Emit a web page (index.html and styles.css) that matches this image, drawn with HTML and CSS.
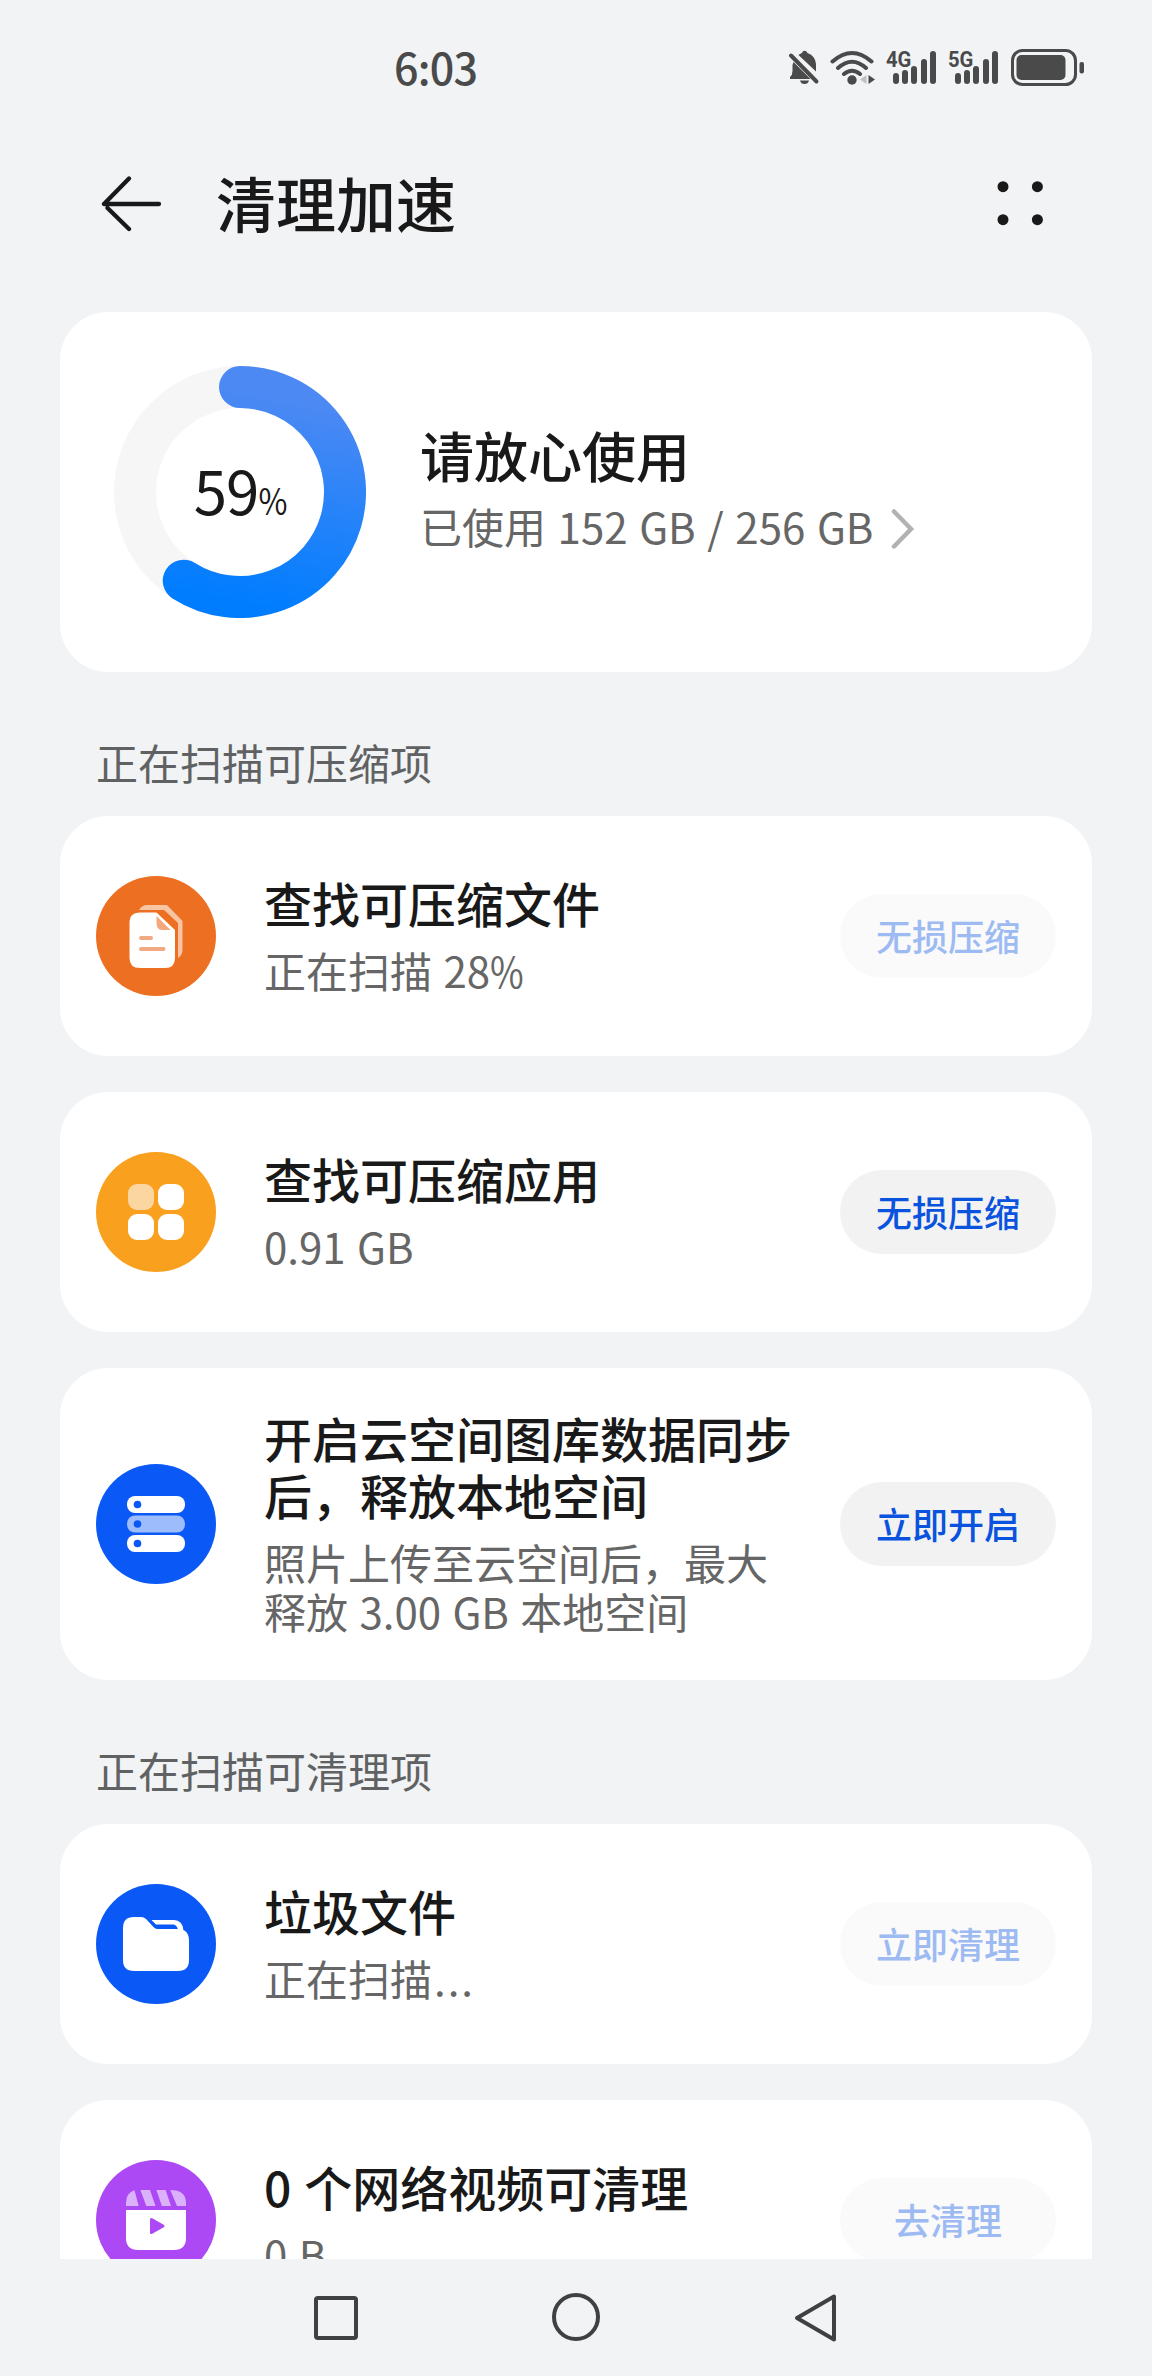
FILE: index.html
```html
<!DOCTYPE html>
<html lang="zh-CN">
<head>
<meta charset="utf-8">
<title>清理加速</title>
<link rel="stylesheet" href="styles.css">
</head>
<body>
<div class="screen">
  <header class="status">
    <span class="time">6:03</span>
    <div class="status-icons">
      <svg class="bell" width="32" height="36" viewBox="0 0 32 36"><path d="M5.500 12 L22.500 29 H2 V27 Q4.500 25 4.500 21 V15 Z M10.500 5 Q12.500 3.500 14 3 Q14.500 0.700 16.500 0.700 Q18.500 0.700 19.500 3 Q27.500 6 28 14 V21.500 Z M12 30.500 H21 Q20 34 16.500 34 Q13 34 12 30.500 Z"/><path class="line" d="M3 5.500 L28.500 31.500" stroke-width="4"/></svg>
      <svg class="wifi" width="46" height="36" viewBox="0 0 46 36"><path class="line" d="M2.500 11.500 Q22 -5.500 41.500 11.500 M8 18 Q22 5.500 36 18 M14 24 Q22 17.500 30 24" stroke-width="4"/><circle cx="22" cy="30" r="4.700"/><path class="faint" d="M36.500 25 V34 L30 29.500 Z"/><path d="M38.500 25 V34 L45 29.500 Z"/></svg>
      <div class="signal"><span class="net">4G</span><i class="bar b1"></i><i class="bar b2"></i><i class="bar b3"></i><i class="bar b4"></i><i class="bar b5"></i></div>
      <div class="signal"><span class="net">5G</span><i class="bar b1"></i><i class="bar b2"></i><i class="bar b3"></i><i class="bar b4"></i><i class="bar b5"></i></div>
      <svg class="battery" width="74" height="38" viewBox="0 0 74 38"><rect class="line" x="1.500" y="1.500" width="63" height="34" rx="10" stroke-width="3"/><rect x="5.500" y="6" width="49" height="25" rx="5"/><rect x="68.500" y="13" width="4.500" height="11.500" rx="2"/></svg>
    </div>
  </header>

  <div class="titlebar">
    <svg class="back" width="62" height="58" viewBox="0 0 62 58"><path d="M3 29 H58 M3 29 L28 3.500 M6.500 33 L28 54"/></svg>
    <h1>清理加速</h1>
    <svg class="more" width="48" height="48" viewBox="0 0 48 48"><circle cx="6" cy="6.700" r="5.500"/><circle cx="40.400" cy="6.700" r="5.500"/><circle cx="6" cy="39.700" r="5.500"/><circle cx="40.400" cy="39.700" r="5.500"/></svg>
  </div>

  <main>
    <section class="card summary">
      <div class="ring">
        <svg width="252" height="252" viewBox="0 0 252 252">
          <defs><linearGradient id="used" x1="0.350" y1="0" x2="0.200" y2="1"><stop offset="0" stop-color="#4d89f3"/><stop offset="1" stop-color="#007dff"/></linearGradient></defs>
          <circle cx="126" cy="126" r="105" fill="none" stroke="#f6f6f6" stroke-width="42"/>
          <path d="M126 21 A105 105 0 1 1 69.740 214.650" fill="none" stroke="url(#used)" stroke-width="42" stroke-linecap="round"/>
        </svg>
        <div class="percent">59<small>%</small></div>
      </div>
      <div class="summary-text">
        <h2>请放心使用</h2>
        <p>已使用 152 GB / 256 GB<svg class="chevron" width="24" height="42" viewBox="0 0 24 42"><path d="M3 3.500 L20 21 L3 38.500"/></svg></p>
      </div>
    </section>

    <h3>正在扫描可压缩项</h3>
    <section class="card row">
      <svg class="icon" viewBox="0 0 120 120"><circle cx="60" cy="60" r="60" fill="#ed6f21"/><path d="M43 34 Q46 29 51 29 H71 L86.500 45 V74 Q86.500 79 82 82 V47 L68 34 Z" fill="#f8c4a2"/><path d="M44 36.500 H60.500 L79 54 V82 Q79 92 69 92 H44 Q33.500 92 33.500 82 V47 Q33.500 36.500 44 36.500 Z" fill="#fff"/><path d="M60.500 40 L74.500 54 H66 Q60.500 54 60.500 47 Z" fill="#f4a77d"/><path d="M45 62 H55 M45 73 H67.500" stroke="#f0a982" stroke-width="4" stroke-linecap="round"/></svg>
      <div class="text"><h4>查找可压缩文件</h4><p>正在扫描 28<span class="pct">%</span></p></div>
      <button class="off" disabled>无损压缩</button>
    </section>
    <section class="card row">
      <svg class="icon" viewBox="0 0 120 120"><circle cx="60" cy="60" r="60" fill="#f9a01e"/><rect x="32" y="32" width="26" height="26" rx="9" fill="#fcd6a1"/><g fill="#fff"><rect x="62" y="32" width="26" height="26" rx="9"/><rect x="32" y="62" width="26" height="26" rx="9"/><rect x="62" y="62" width="26" height="26" rx="9"/></g></svg>
      <div class="text"><h4>查找可压缩应用</h4><p>0.91 GB</p></div>
      <button>无损压缩</button>
    </section>
    <section class="card row tall">
      <svg class="icon" viewBox="0 0 120 120"><circle cx="60" cy="60" r="60" fill="#0a59f7"/><rect x="31" y="32" width="58" height="17" rx="8" fill="#fff"/><rect x="31" y="51.500" width="58" height="17" rx="8" fill="#9dbcfc"/><rect x="31" y="71" width="58" height="17" rx="8" fill="#fff"/><g fill="#0a59f7"><circle cx="41.500" cy="40.500" r="3.800"/><circle cx="41.500" cy="60" r="3.800"/><circle cx="41.500" cy="79.500" r="3.800"/></g></svg>
      <div class="text"><h4>开启云空间图库数据同步<br>后，释放本地空间</h4><p>照片上传至云空间后，最大<br>释放 3.00 GB 本地空间</p></div>
      <button>立即开启</button>
    </section>

    <h3>正在扫描可清理项</h3>
    <section class="card row">
      <svg class="icon" viewBox="0 0 120 120"><circle cx="60" cy="60" r="60" fill="#0a59f7"/><path d="M38 33 H45 Q48 33 50 35 L58 43.500 Q59.500 45 62 45 H82 Q93 45 93 57 V76 Q93 87 82 87 H38 Q27 87 27 76 V44 Q27 33 38 33 Z" fill="#fff"/><path d="M55.500 36 H78 Q86.500 36 87.500 46.500 L82 45.500 Q80.500 40.500 77 40.500 H60 Z" fill="#fff"/></svg>
      <div class="text"><h4>垃圾文件</h4><p>正在扫描<span class="dots">...</span></p></div>
      <button class="off" disabled>立即清理</button>
    </section>
    <section class="card row">
      <svg class="icon" viewBox="0 0 120 120"><circle cx="60" cy="60" r="60" fill="#ac48f4"/><path d="M30 46 V43 Q30 33 38.500 30.300 L42.700 46 Z M44.400 30 H54 L59.500 46 H50.300 Z M60.400 30 H69.600 L75 46 H65.900 Z M74.300 30 Q90 30 90 43 V46 H81 Z" fill="#dcb1fb"/><path d="M30 50 H90 V78 Q90 90 78 90 H42 Q30 90 30 78 Z" fill="#fff"/><path d="M55.500 59.500 L67 66 L55.500 72.500 Z" fill="#ac48f4" stroke="#ac48f4" stroke-width="3" stroke-linejoin="round"/></svg>
      <div class="text"><h4>0 个网络视频可清理</h4><p>0 B</p></div>
      <button class="off" disabled>去清理</button>
    </section>
  </main>

  <nav>
    <svg width="52" height="52" viewBox="0 0 52 52"><rect x="6" y="6" width="40" height="40" rx="2"/></svg>
    <svg width="52" height="52" viewBox="0 0 52 52"><circle cx="26" cy="25" r="22"/></svg>
    <svg width="52" height="52" viewBox="0 0 52 52"><path d="M44 4.500 V47.500 L7 26 Z"/></svg>
  </nav>
</div>
</body>
</html>
```

FILE: styles.css
```css
* { box-sizing: border-box; margin: 0; padding: 0; }
body { background: #f1f3f5; font-family: "Noto Sans CJK SC", sans-serif; color: #191919; }
svg { display: block; flex: none; }
h1, h2, h4 { font-weight: 500; }
.screen { width: 1152px; height: 2376px; display: flex; flex-direction: column; overflow: hidden; }

.status { height: 132px; flex: none; display: flex; justify-content: space-between; padding: 49px 67px 0 394px; color: #4a4a4a; fill: #4a4a4a; }
.time { font-size: 43px; line-height: 34px; font-weight: 500; letter-spacing: -0.800px; }
.status-icons { display: flex; }
.status-icons .line { fill: none; stroke: #4a4a4a; stroke-linecap: round; }
.faint { fill: #bfc0c1; }
.bell { margin: 1px 10px 0 0; }
.wifi { margin: 1px 11px 0 0; }
.signal { position: relative; width: 50px; height: 35px; margin-right: 12px; padding-left: 6px; display: flex; align-items: flex-end; gap: 3.200px; }
.net { position: absolute; left: -1px; top: 0; font: bold 22px/21px "Roboto", sans-serif; transform: scaleX(.92); transform-origin: 0 0; }
.bar { width: 6px; border-radius: 3px; background: #4a4a4a; }
.b1 { height: 11px; }
.b2 { height: 14px; }
.b3 { height: 18px; }
.b4 { height: 25px; }
.b5 { height: 33px; }

.titlebar { height: 180px; flex: none; display: flex; align-items: flex-start; padding: 43px 107px 0 101px; }
.back { fill: none; stroke: #191919; stroke-width: 4.300; stroke-linecap: round; }
.titlebar h1 { font-size: 60px; line-height: 60px; margin: -3px auto 0 53px; }
.more { margin-top: 5px; fill: #191919; }

main { height: 1947px; flex: none; overflow: hidden; padding: 0 60px; }
.card { background: #fff; border-radius: 48px; margin-bottom: 36px; display: flex; align-items: center; }
.summary { height: 360px; margin-bottom: 0; padding-left: 54px; }
.ring { display: grid; place-items: center; margin-right: 54px; }
.ring > * { grid-area: 1 / 1; }
.percent { font-size: 60px; line-height: 60px; padding: 0 0 6px 5px; letter-spacing: -1px; }
.percent small { display: inline-block; font-size: 37px; line-height: 40px; transform: scaleX(.85); transform-origin: 4px 0; }
.summary-text { padding-bottom: 10px; }
.summary h2 { font-size: 54px; line-height: 64px; }
.summary p { font-size: 42px; line-height: 50px; margin-top: 14px; color: #666; display: flex; align-items: center; white-space: pre; word-spacing: 2.200px; }
.chevron { margin: 5px 0 0 18px; fill: none; stroke: #b2b2b2; stroke-width: 4.500; stroke-linecap: round; }
h3 { height: 144px; padding: 61px 36px 0; font-size: 42px; line-height: 57px; font-weight: 400; color: #606162; }

.row { height: 240px; padding: 0 36px; }
.tall { height: 312px; margin-bottom: 0; }
.icon { width: 120px; height: 120px; }
.text { flex: 1; padding: 0 0 4px 48px; white-space: nowrap; word-spacing: 2px; }
.text h4 { font-size: 48px; line-height: 57px; }
.text p { font-size: 42px; line-height: 49px; margin-top: 14px; color: #666; }
.pct { display: inline-block; transform: scaleX(.87); transform-origin: 0 0; }
.dots { letter-spacing: 2px; margin-left: 2px; }
button { flex: none; width: 216px; height: 84px; border: 0; border-radius: 42px; background: #f2f2f2; color: #0a53de; font: 500 36px/48px "Noto Sans CJK SC", sans-serif; padding-bottom: 3px; }
.off { background: #fafafa; color: #9dbaf2; }

nav { flex: 1; display: flex; justify-content: center; gap: 188px; padding-top: 33px; background: #f1f3f5; fill: none; stroke: #3e4042; stroke-width: 4; stroke-linejoin: round; }
```
